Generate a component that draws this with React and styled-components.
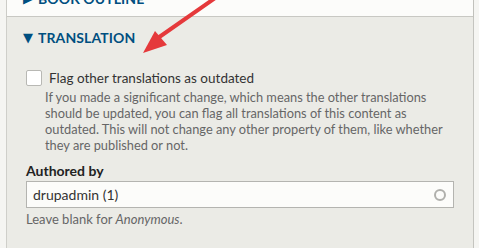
import React from 'react';
import styled, { createGlobalStyle } from 'styled-components';

const GlobalStyle = createGlobalStyle`
  html, body {
    margin: 0;
    padding: 0;
    background: #f5f5f2;
    font-family: Lato, "Open Sans", sans-serif;
    overflow: hidden;
  }
`;

const Sidebar = styled.div`
  position: relative;
  margin: -20px 5px 0 6px;
  height: 268px;
  background: #ebebe6;
  border-left: 1px solid #cfcfca;
  border-right: 1px solid #c4c4bf;
`;

const Details = styled.div`
  background: ${(props) => (props.open ? '#ebebe6' : '#fcfcfa')};
  border-bottom: ${(props) => (props.open ? 'none' : '1px solid #c8c8c3')};
  box-shadow: ${(props) => (props.open ? 'none' : '0 1px 1px rgba(0,0,0,0.08)')};
`;

const Summary = styled.div`
  display: flex;
  align-items: center;
  gap: 4px;
  height: ${(props) => props.height || '26px'};
  padding: 0 0 0 16px;
  color: #004f80;
  font-weight: 700;
  font-size: 14px;
  text-transform: uppercase;
  letter-spacing: 0.1px;
`;

const Caret = styled.span`
  font-family: "DejaVu Sans", sans-serif;
  font-size: 13px;
  width: 11px;
  line-height: 1;
`;

const Body = styled.div`
  padding: 13px 19px 0 19px;
`;

const CheckRow = styled.label`
  display: flex;
  align-items: center;
  gap: 7px;
`;

const Box = styled.span`
  width: 14px;
  height: 14px;
  border: 1px solid #b8b8b4;
  border-radius: 2px;
  background: #fff;
  flex: none;
`;

const CheckLabel = styled.span`
  font-size: 13.5px;
  line-height: 16px;
  color: #333;
`;

const Description = styled.div`
  margin: 3px 6px 0 ${(props) => props.indent || '0'};
  font-size: 12.8px;
  line-height: 16px;
  color: #666;
`;

const FieldLabel = styled.div`
  margin-top: 9px;
  font-size: 14px;
  font-weight: 700;
  color: #222;
  line-height: 18px;
`;

const InputWrap = styled.div`
  display: flex;
  align-items: center;
  height: 25px;
  margin-top: 1px;
  padding: 0 7px 0 6px;
  border: 1px solid #b4b4b0;
  background: #fcfcfa;
  font-size: 14px;
  color: #333;
`;

const InputText = styled.span`
  flex: 1;
`;

const Throbber = styled.span`
  width: 8px;
  height: 8px;
  border: 2px solid #b0b0ac;
  border-radius: 50%;
`;

const Help = styled.div`
  margin-top: 3px;
  font-size: 13px;
  line-height: 16px;
  color: #666;
`;

const Arrow = styled.svg`
  position: absolute;
  left: 123px;
  top: 20px;
  overflow: visible;
  pointer-events: none;
`;

const App = () => (
  <>
    <GlobalStyle />
    <Sidebar>
      <Details>
        <Summary height="36px">
          <Caret>▶</Caret>Book outline
        </Summary>
      </Details>
      <Details open>
        <Summary height="40px">
          <Caret>▼</Caret>Translation
        </Summary>
        <Body>
          <CheckRow>
            <Box />
            <CheckLabel>Flag other translations as outdated</CheckLabel>
          </CheckRow>
          <Description indent="19px">
            If you made a significant change, which means the other translations
            should be updated, you can flag all translations of this content as
            outdated. This will not change any other property of them, like whether
            they are published or not.
          </Description>
          <FieldLabel>Authored by</FieldLabel>
          <InputWrap>
            <InputText>drupadmin (1)</InputText>
            <Throbber />
          </InputWrap>
          <Help>
            Leave blank for <em>Anonymous</em>.
          </Help>
        </Body>
      </Details>
      <Arrow width="100" height="60" viewBox="0 0 100 60">
        <line x1="88" y1="-4" x2="25" y2="40" stroke="#e5393b" strokeWidth="4" strokeLinecap="round" />
        <polygon points="13,53 25,31 37,45" fill="#e5393b" />
      </Arrow>
    </Sidebar>
  </>
);

export default App;
